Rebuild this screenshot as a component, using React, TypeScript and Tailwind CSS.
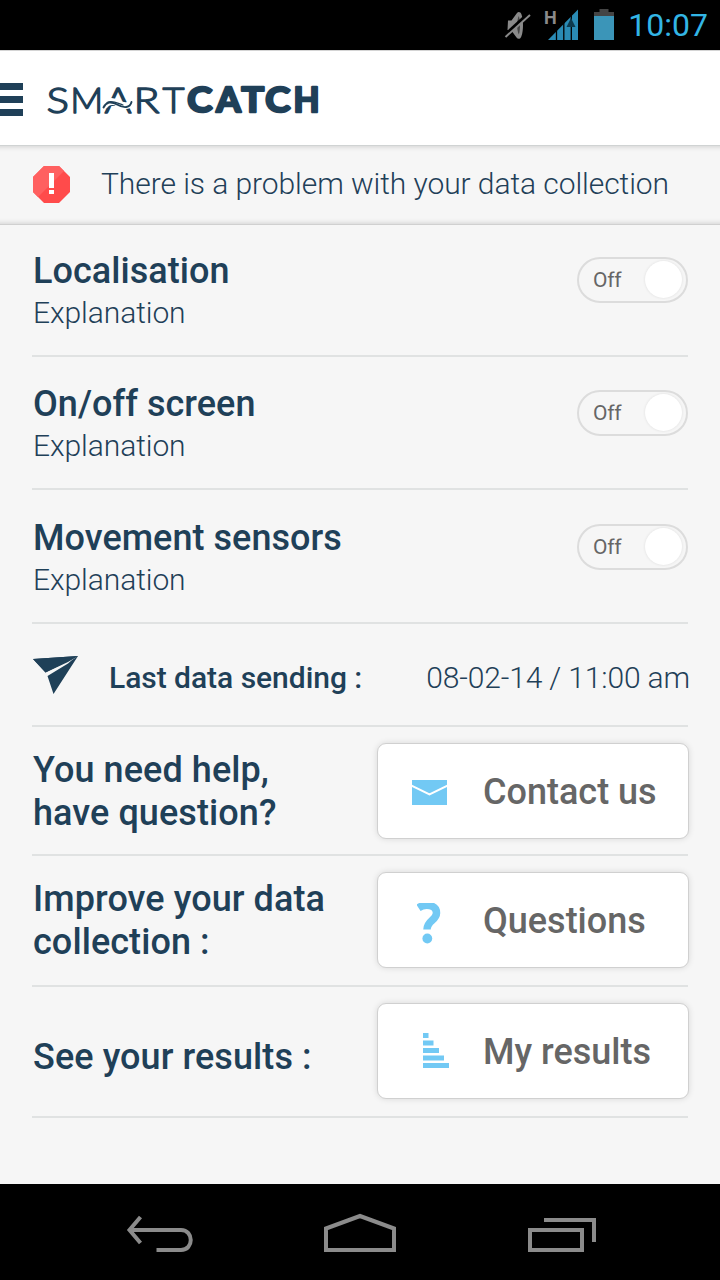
import React from 'react';

function StatusBar() {
  return (
    <div className="flex h-[50px] items-center justify-end bg-black pr-3">
      <svg width="120" height="50" viewBox="0 0 120 50" className="shrink-0">
        <path d="M8 20.500h3.500l5.500-7.500c1.500-1.600 3.500-1 4.500 1.500c2 5 2 16 0 21.500c-1 3.200-3.500 3.700-5 1.500l-5.500-7.500h-3.500z" fill="#8a8a8a" />
        <path d="M18.800 16c-2.200 4-2.200 14 0 18.500c1.600-4 1.600-14 0-18.500z" fill="#444" />
        <path d="M4 36L28 14" stroke="#000" strokeWidth="3.500" />
        <path d="M5.500 37L30 15" stroke="#8a8a8a" strokeWidth="2" />
        <text x="44" y="23.500" fontSize="18" fontWeight="700" fill="#8a8a8a" fontFamily="Roboto, sans-serif">H</text>
        <path d="M48 40L78 9.500V40z" fill="#2a8bb5" />
        <path d="M56.500 26v15M63.800 20v21M71.300 13v28" stroke="#000" strokeWidth="1.300" />
        <path d="M71 18l4.500 9h-9z" fill="#0d3a4e" />
        <path d="M99.500 9h9v3h5.500v5h-20v-5h5.500z" fill="#444" />
        <path d="M94 16h20v24h-20z" fill="#3b95b8" />
      </svg>
      <span className="ml-[8px] font-['Roboto',sans-serif] text-[32px] leading-[50px] text-[#33b5e5]">10:07</span>
    </div>
  );
}

function Logo() {
  return (
    <svg width="290" height="60" viewBox="42 70 290 60" fill="#1f4058" stroke="#1f4058" strokeLinejoin="round">
      <g fontFamily="Lato, sans-serif" fontSize="36" fontWeight="300" strokeWidth="1.400">
        <text x="46.500" y="112.800" textLength="22.500" lengthAdjust="spacingAndGlyphs">S</text>
        <text x="70.300" y="112.800" textLength="33" lengthAdjust="spacingAndGlyphs">M</text>
        <text x="104.500" y="112.800" textLength="27" lengthAdjust="spacingAndGlyphs">A</text>
        <text x="133.500" y="112.800" textLength="26" lengthAdjust="spacingAndGlyphs">R</text>
        <text x="162.500" y="112.800" textLength="22" lengthAdjust="spacingAndGlyphs">T</text>
      </g>
      <path d="M104 106.500C108 100.500 113 100.500 118 103.500C124 106.500 129 106 132 103" fill="none" stroke="#fff" strokeWidth="6.500" />
      <path d="M103.500 107.500C106 102 111 101 117 104.500C124 108.500 130 108 131.500 102" fill="none" strokeWidth="1.900" strokeLinecap="round" />
      <path d="M107 102.500C112 99.500 118 103.500 123 105" fill="none" strokeWidth="1.200" strokeLinecap="round" />
      <g fontFamily="Lato, sans-serif" fontSize="34.500" fontWeight="700" strokeWidth="2.500">
        <text x="187.300" y="112.300" textLength="25" lengthAdjust="spacingAndGlyphs">C</text>
        <text x="216.200" y="112.300" textLength="24.500" lengthAdjust="spacingAndGlyphs">A</text>
        <text x="241.500" y="112.300" textLength="22.500" lengthAdjust="spacingAndGlyphs">T</text>
        <text x="265.300" y="112.300" textLength="25" lengthAdjust="spacingAndGlyphs">C</text>
        <text x="293.500" y="112.300" textLength="26" lengthAdjust="spacingAndGlyphs">H</text>
      </g>
    </svg>
  );
}

function Header() {
  return (
    <header className="flex h-24 items-center border-t border-b border-t-[#d4d4d4] border-b-[#d0d3d3] bg-white">
      <div className="mt-[3px] flex w-[23px] flex-col gap-[6px]">
        <div className="h-[7px] bg-[#1f4058]" />
        <div className="h-[7px] bg-[#1f4058]" />
        <div className="h-[7px] bg-[#1f4058]" />
      </div>
      <div className="mt-[4px] ml-[19px]"><Logo /></div>
    </header>
  );
}

function Alert() {
  return (
    <div className="flex h-[79px] items-center border-b border-[#d0d0d0] bg-[#f6f6f6] pl-[33px] shadow-[inset_0_7px_5px_-6px_rgba(0,0,0,0.15),inset_0_-7px_5px_-6px_rgba(0,0,0,0.15)]">
      <svg width="37" height="37" viewBox="0 0 37 37" className="-mt-[2px]">
        <path d="M11 0h15l11 11v15l-11 11h-15l-11-11v-15z" fill="#ff4b4b" />
        <path d="M11 0h15l5 5L5 31l-5-5v-15z" fill="#ff6060" />
        <path d="M16 7h5v15h-5zM16 24h5v4h-5z" fill="#fff" />
      </svg>
      <span className="-mt-[4px] ml-[31px] text-[30px] font-light tracking-[-0.07px] whitespace-nowrap">There is a problem with your data collection</span>
    </div>
  );
}

function Toggle() {
  return (
    <button className="mb-[52px] flex h-[46px] w-[111px] items-center justify-between rounded-full border-2 border-[#dcdcdc] pr-[4px] pl-[14px]">
      <span className="pt-[2px] text-[21px] tracking-[-0.3px] text-[#666]">Off</span>
      <span className="-mt-px size-[37px] rounded-full bg-white shadow-[0_0_3px_rgba(0,0,0,0.1)]" />
    </button>
  );
}

function Setting({ title, height }: { title: string; height: string }) {
  return (
    <section className={`flex items-end justify-between border-b-2 border-[#e0e2e2] ${height}`}>
      <div className="mb-[21px] pl-px">
        <h2 className="text-[36px] leading-[42px] font-medium tracking-[0.04px]">{title}</h2>
        <p className="text-[30px] leading-[42px] font-light tracking-[-0.08px]">Explanation</p>
      </div>
      <Toggle />
    </section>
  );
}

function Action({ label, icon, children, height, text }: { label: string; icon: React.ReactNode; children: React.ReactNode; height: string; text: string }) {
  return (
    <section className={`flex items-end justify-between border-b-2 border-[#e0e2e2] ${height}`}>
      <h2 className={`pl-px text-[36px] leading-[43px] font-medium tracking-[0.08px] whitespace-nowrap ${text}`}>{children}</h2>
      <button className="-mr-px flex h-24 w-[312px] shrink-0 items-center rounded-[9px] border border-[#d0d0d0] bg-white shadow-[0_0_6px_rgba(0,0,0,0.12)]">
        <span className="flex w-[105px] justify-center">{icon}</span>
        <span className="pt-[2px] text-[36px] font-medium whitespace-nowrap text-[#666]">{label}</span>
      </button>
    </section>
  );
}

const mail = (
  <svg width="35" height="25" viewBox="0 0 35 25" className="mt-[3px] mr-[2px]">
    <path d="M0 0h35v25H0z" fill="#72c9f4" />
    <path d="M-1 5.500L17.500 14.500L36 5.500" fill="none" stroke="#fff" strokeWidth="2" />
  </svg>
);

const question = (
  <svg width="24" height="42" viewBox="0 0 24 42" className="mt-[8px] mr-[3px]">
    <path d="M1.500 4.800C8 .500 19.500 1.500 19.500 10C19.500 17.500 10 17.500 10 26.500" fill="none" stroke="#72c9f4" strokeWidth="7.500" />
    <circle cx="10.300" cy="35.500" r="4.900" fill="#72c9f4" />
  </svg>
);

const bars = (
  <svg width="26" height="35" viewBox="0 0 26 35" className="-mt-px ml-[11px]">
    <path d="M0 0h5.500v5H0zM0 7.500h10.500v5H0zM0 15h16v5H0zM0 22.500h21v5H0zM0 30h26v5H0z" fill="#72c9f4" />
  </svg>
);

function NavBar() {
  return (
    <nav className="h-24 bg-black">
      <svg width="720" height="96" viewBox="0 1184 720 96" fill="none" stroke="#8b8b8b" strokeWidth="4">
        <path d="M140.500 1217L129.500 1230L140.500 1243M131 1230H181C194 1230 194 1250 181 1250H156.500" />
        <path d="M326 1250V1228.500L360 1216L394 1228.500V1250z" />
        <path d="M530 1230h52v20h-52zM544 1220h50v22" />
      </svg>
    </nav>
  );
}

export default function App() {
  return (
    <div className="flex h-[1280px] w-[720px] flex-col overflow-hidden bg-[#f6f6f6] font-['Roboto',sans-serif] text-[#1f4058]">
      <StatusBar />
      <Header />
      <Alert />
      <main className="flex-1 px-8">
        <Setting title="Localisation" height="h-[132px]" />
        <Setting title="On/off screen" height="h-[133px]" />
        <Setting title="Movement sensors" height="h-[134px]" />
        <section className="flex h-[103px] items-center border-b-2 border-[#e0e2e2]">
          <svg width="47" height="40" viewBox="0 0 47 40" className="mt-[2px]">
            <path d="M1 3L46 0L13.500 16.500zM46 0L21.500 38L15.500 20L36 7.500L40 4z" fill="#1f4058" />
            <path d="M1 3L46 0L36 6L13.500 16.500z" fill="#1f4058" />
          </svg>
          <span className="ml-[30px] pt-[6px] text-[30px] font-medium tracking-[-0.03px] whitespace-nowrap">Last data sending :</span>
          <span className="-mr-[2px] ml-auto pt-[6px] text-[30px] font-light tracking-[-0.14px] whitespace-nowrap">08-02-14 / 11:00 am</span>
        </section>
        <Action label="Contact us" icon={mail} height="h-[129px] pb-[15px]" text="mb-[4px]">You need help,<br />have question?</Action>
        <Action label="Questions" icon={question} height="h-[131px] pb-[17px]" text="mb-[4px]">Improve your data<br />collection :</Action>
        <Action label="My results" icon={bars} height="h-[131px] pb-[17px]" text="mb-[20px]">See your results :</Action>
      </main>
      <NavBar />
    </div>
  );
}
